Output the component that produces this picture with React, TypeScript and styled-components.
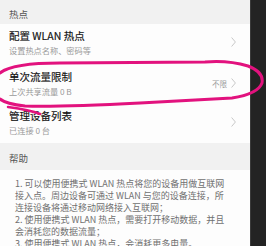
import React from "react";
import styled, { createGlobalStyle } from "styled-components";

const Global = createGlobalStyle`
  html, body { margin: 0; padding: 0; background: #222; overflow: hidden; }
  body { font-family: "Noto Sans CJK SC", "Noto Sans", sans-serif; }
`;

const Frame = styled.div`
  position: relative;
  width: 266px;
  height: 246px;
  display: flex;
  overflow: hidden;
`;

const Screen = styled.div`
  width: 250px;
  height: 246px;
  background: #fdfdfd;
  display: flex;
  flex-direction: column;
  overflow: hidden;
`;

const DarkStrip = styled.div`
  flex: 1;
  background: #232323;
  border-left: 1px solid #3a3a3a;
`;

const SectionHeader = styled.div<{ $h: number }>`
  height: ${(p) => p.$h}px;
  box-sizing: border-box;
  background: #f1f1f1;
  padding: 3px 0 0 9px;
  display: flex;
  align-items: center;
  font-size: 9.5px;
  color: #555;
  flex-shrink: 0;
`;

const Row = styled.div<{ $h: number }>`
  height: ${(p) => p.$h}px;
  box-sizing: border-box;
  padding: 0 14px 0 9px;
  display: flex;
  align-items: center;
  flex-shrink: 0;
`;

const RowText = styled.div`
  flex: 1;
  display: flex;
  flex-direction: column;
  margin-top: -2px;
`;

const Title = styled.div`
  font-size: 10.5px;
  line-height: 14px;
  font-weight: 400;
  color: #111;
  white-space: nowrap;
  -webkit-text-stroke: 0.15px #111;
`;

const Sub = styled.div`
  font-size: 8.2px;
  line-height: 13px;
  margin-top: 1px;
  color: #9a9a9a;
  white-space: nowrap;
`;

const Value = styled.span`
  font-size: 7.5px;
  color: #9a9a9a;
  margin-right: 4px;
  margin-top: -2px;
`;

const Chevron = styled.svg`
  width: 5px;
  height: 10px;
  margin-top: -4px;
`;

const HelpBody = styled.div`
  padding: 8px 0 0 15px;
  font-size: 9px;
  line-height: 12px;
  color: #707070;
`;

const Line = styled.div`
  white-space: nowrap;
`;

const Annotation = styled.svg`
  position: absolute;
  left: 0;
  top: 0;
  pointer-events: none;
`;

const ChevronIcon = () => (
  <Chevron viewBox="0 0 5 10">
    <path d="M0.6 0.5 L4.4 5 L0.6 9.5" fill="none" stroke="#c2c2c2" strokeWidth="0.9" />
  </Chevron>
);

export default function App() {
  return (
    <>
      <Global />
      <Frame>
        <Screen>
          <SectionHeader $h={24}>热点</SectionHeader>
          <Row $h={40}>
            <RowText>
              <Title>配置 WLAN 热点</Title>
              <Sub>设置热点名称、密码等</Sub>
            </RowText>
            <ChevronIcon />
          </Row>
          <Row $h={41}>
            <RowText>
              <Title>单次流量限制</Title>
              <Sub>上次共享流量 0 B</Sub>
            </RowText>
            <Value>不限</Value>
            <ChevronIcon />
          </Row>
          <Row $h={38}>
            <RowText>
              <Title>管理设备列表</Title>
              <Sub>已连接 0 台</Sub>
            </RowText>
            <ChevronIcon />
          </Row>
          <SectionHeader $h={27}>帮助</SectionHeader>
          <HelpBody>
            <Line>1. 可以使用便携式 WLAN 热点将您的设备用做互联网</Line>
            <Line>接入点。周边设备可通过 WLAN 与您的设备连接，所</Line>
            <Line>连接设备将通过移动网络接入互联网；</Line>
            <Line>2. 使用便携式 WLAN 热点，需要打开移动数据，并且</Line>
            <Line>会消耗您的数据流量；</Line>
            <Line>3. 使用便携式 WLAN 热点，会消耗更多电量。</Line>
          </HelpBody>
        </Screen>
        <DarkStrip />
        <Annotation width="266" height="246" viewBox="0 0 266 246">
          <path
            d="M0 73 Q12 63 60 63 L205 62 Q228 60 248 66 Q264 72 262 83 Q258 94 232 98 L140 103 Q60 107 25 106 Q6 104 0 99"
            fill="none"
            stroke="#e2127e"
            strokeWidth="3"
            strokeLinecap="round"
          />
          <path
            d="M8 107 Q30 110 40 114"
            fill="none"
            stroke="#e2127e"
            strokeWidth="2.5"
            strokeLinecap="round"
          />
        </Annotation>
      </Frame>
    </>
  );
}
